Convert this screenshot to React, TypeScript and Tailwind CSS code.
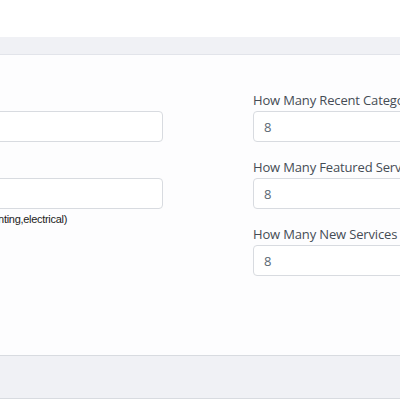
/**
 * Settings card: home page counts form (cropped view).
 */

const RIGHT_FIELDS = [
  { label: "How Many Recent Categories In Home Page", value: "8" },
  { label: "How Many Featured Services In Home Page", value: "8" },
  { label: "How Many New Services In Home Page", value: "8" },
];

const labelCls =
  "block h-[21px] text-[13px] leading-[21px] tracking-[-0.15px] text-[#454c55] whitespace-nowrap";
const inputCls =
  "block w-full h-[31px] px-[10px] rounded-[4px] border border-[#d8dbe0] bg-white text-[13px] text-[#5c6873] focus:outline-none";

export default function App() {
  return (
    <div
      className="w-[400px] h-[400px] overflow-hidden bg-white"
      style={{ fontFamily: '"Open Sans", "Noto Sans", sans-serif' }}
    >
      <div className="h-[37px]" />

      {/* Card */}
      <div className="bg-white border-b border-[#d8dbe0]">
        {/* Header */}
        <div className="h-[18px] bg-[#f0f1f5] border-b border-[#e2e4ea]" />

        {/* Body */}
        <div className="h-[300px] bg-[#fdfdfe] pt-[35px] overflow-hidden">
          <div className="flex gap-[90px] -ml-[230px] w-[800px]">
            {/* Left column */}
            <div className="w-[393px] shrink-0 flex flex-col">
              <div className="mb-[15px]">
                <label className={labelCls}>Site Name</label>
                <input className={inputCls} defaultValue="" />
              </div>
              <div>
                <label className={labelCls}>Keywords</label>
                <input className={inputCls} defaultValue="" />
                <p
                  className="mt-[1px] w-[297px] text-right text-[11px] leading-[18px] tracking-[-0.3px] text-[#222] whitespace-nowrap"
                  style={{ fontFamily: '"Liberation Sans", Arial, sans-serif' }}
                >
                  Separate by comma (ex: plumbing,painting,electrical)
                </p>
              </div>
            </div>

            {/* Right column */}
            <div className="w-[300px] shrink-0 flex flex-col gap-[15px]">
              {RIGHT_FIELDS.map((f) => (
                <div key={f.label}>
                  <label className={labelCls}>{f.label}</label>
                  <input className={inputCls} defaultValue={f.value} />
                </div>
              ))}
            </div>
          </div>
        </div>

        {/* Footer */}
        <div className="h-[43px] bg-[#f0f1f5] border-t border-[#d8dbe0]" />
      </div>
    </div>
  );
}
